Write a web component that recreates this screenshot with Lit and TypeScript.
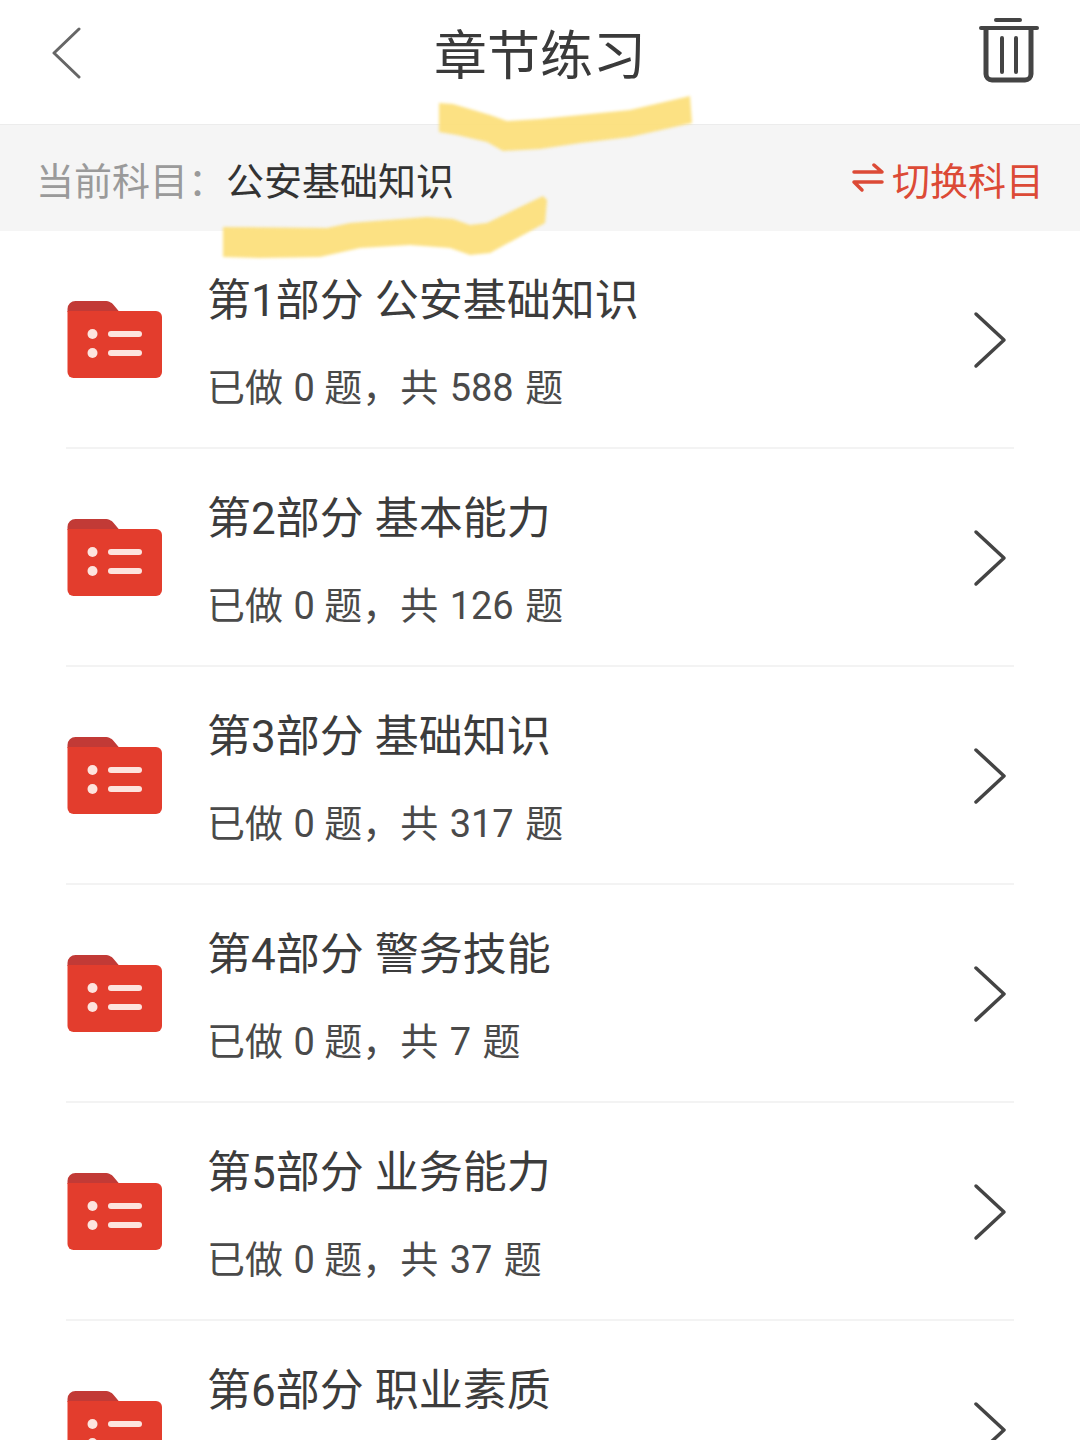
import { LitElement, html, css, svg } from 'lit';
import { customElement } from 'lit/decorators.js';

interface Chapter {
  title: string;
  total: number;
}

const CHAPTERS: Chapter[] = [
  { title: '第1部分 公安基础知识', total: 588 },
  { title: '第2部分 基本能力', total: 126 },
  { title: '第3部分 基础知识', total: 317 },
  { title: '第4部分 警务技能', total: 7 },
  { title: '第5部分 业务能力', total: 37 },
  { title: '第6部分 职业素质', total: 0 },
];

const folderIcon = svg`
  <svg class="folder" width="96" height="80" viewBox="0 0 96 80" fill="none">
    <path d="M1.5 9a8 8 0 0 1 8-8h29c5 0 8 2 10 5l5 6H1.5z" fill="#c23a36" />
    <path d="M1.5 11H90a6 6 0 0 1 6 6v55a6 6 0 0 1-6 6H7.500a6 6 0 0 1-6-6z" fill="#e33d2d" />
    <circle cx="26.500" cy="34" r="5" fill="#fde4de" />
    <circle cx="26.500" cy="53" r="5" fill="#fde4de" />
    <rect x="42" y="31" width="34" height="6" rx="3" fill="#fde4de" />
    <rect x="42" y="50" width="34" height="6" rx="3" fill="#fde4de" />
  </svg>
`;

const chevronIcon = svg`
  <svg class="chevron" width="34" height="58" viewBox="0 0 34 58" fill="none">
    <path d="M3 3l28 26L3 55" stroke="#444" stroke-width="3.500" stroke-linecap="round" stroke-linejoin="round" />
  </svg>
`;

@customElement('app-root')
export class AppRoot extends LitElement {
  static styles = css`
    :host {
      display: block;
      position: relative;
      width: 1080px;
      height: 1440px;
      overflow: hidden;
      background: #fff;
      font-family: Roboto, 'Noto Sans CJK SC', sans-serif;
      color: #3c3c3c;
    }
    .header {
      height: 124px;
      display: flex;
      align-items: center;
      justify-content: space-between;
      padding: 0 41px 14px 52px;
      box-sizing: border-box;
      position: relative;
    }
    .back {
      margin-top: -4px;
    }
    .trash {
      margin-top: -8px;
    }
    .title {
      position: absolute;
      left: 0;
      right: 0;
      top: 25px;
      text-align: center;
      font-size: 53px;
      line-height: 64px;
      color: #3a3a3a;
    }
    .subject-bar {
      height: 107px;
      display: flex;
      align-items: center;
      justify-content: space-between;
      padding: 0 36px;
      box-sizing: border-box;
      background: #f5f5f5;
      border-top: 1px solid #ececec;
      font-size: 38px;
    }
    .subject {
      display: flex;
      align-items: center;
    }
    .subject .label {
      color: #9a9a9a;
      width: 190px;
    }
    .subject .name {
      color: #333;
    }
    .switch {
      display: flex;
      align-items: center;
      gap: 8px;
      color: #dc4a36;
    }
    .list {
      padding: 0 66px;
    }
    .row {
      height: 218px;
      display: grid;
      grid-template-columns: 141px 1fr auto;
      align-items: center;
      box-sizing: border-box;
      border-bottom: 2px solid #f3f3f3;
      padding-right: 7px;
    }
    .folder {
      display: block;
      margin-top: 2px;
    }
    .chevron {
      margin-top: 2px;
    }
    .text {
      display: flex;
      flex-direction: column;
      gap: 30px;
      margin-top: 4px;
    }
    .row-title {
      font-size: 44px;
      line-height: 64px;
      color: #3c3c3c;
      white-space: nowrap;
    }
    .row-sub {
      font-size: 38px;
      line-height: 50px;
      color: #4a4a4a;
      white-space: nowrap;
    }
    .done {
      margin-left: 1px;
    }
    .total {
      margin: 0 2px;
    }
    .marks {
      position: absolute;
      left: 0;
      top: 0;
      pointer-events: none;
      filter: blur(1.5px);
    }
  `;

  render() {
    return html`
      <div class="header">
        <svg class="back" width="30" height="52" viewBox="0 0 30 52" fill="none">
          <path d="M27 2L2 26l25 24" stroke="#666" stroke-width="3" stroke-linecap="round" stroke-linejoin="round" />
        </svg>
        <div class="title">章节练习</div>
        <svg class="trash" width="60" height="66" viewBox="0 0 60 66" fill="none" stroke="#444" stroke-linecap="round">
          <path d="M17 2h24" stroke-width="4" />
          <path d="M2 10h56" stroke-width="4" />
          <path d="M7 12v44a6 6 0 0 0 6 6h33a6 6 0 0 0 6-6V12" stroke-width="5" />
          <path d="M23 20v34M37 20v34" stroke-width="4" />
        </svg>
      </div>
      <div class="subject-bar">
        <div class="subject">
          <span class="label">当前科目：</span>
          <span class="name">公安基础知识</span>
        </div>
        <div class="switch">
          <svg width="32" height="30" viewBox="0 0 32 30" fill="none" stroke="#dc4a36" stroke-width="3.500" stroke-linecap="round" stroke-linejoin="round">
            <path d="M2 9h28l-8-7" />
            <path d="M30 19H2l8 8" />
          </svg>
          <span>切换科目</span>
        </div>
      </div>
      <div class="list">
        ${CHAPTERS.map(
          (c) => html`
            <div class="row">
              ${folderIcon}
              <div class="text">
                <div class="row-title">${c.title}</div>
                <div class="row-sub">已做 <span class="done">0</span> 题，共 <span class="total">${c.total}</span> 题</div>
              </div>
              ${chevronIcon}
            </div>
          `
        )}
      </div>
      <svg class="marks" width="1080" height="300" viewBox="0 0 1080 300" fill="#fcdf7c" fill-opacity="0.95">
        <path d="M439 103L453 104L490 115L507 121L540 119L630 110L690 96L692 123L630 137L580 143L540 149L503 151L487 142L457 135L439 132Z" />
        <path d="M223 227L327 228L350 223L427 217L453 219L470 225L487 223L543 196L547 200L545 223L490 253L470 255L450 248L410 245L360 248L320 257L260 258L223 257Z" />
      </svg>
    `;
  }
}

declare global {
  interface HTMLElementTagNameMap {
    'app-root': AppRoot;
  }
}
